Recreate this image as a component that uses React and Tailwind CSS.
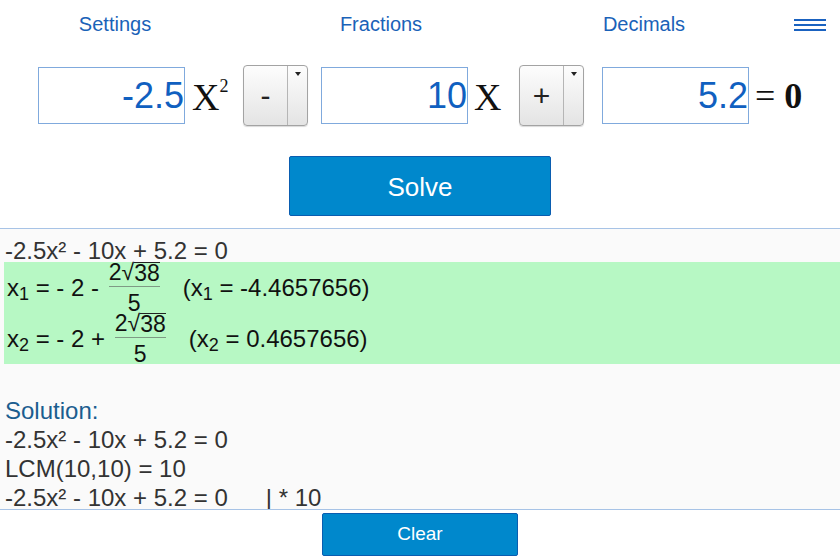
import React from "react";

const sans = { fontFamily: '"Liberation Sans", Arial, sans-serif' };
const serif = { fontFamily: '"Liberation Serif", "Times New Roman", serif' };

const Coef = ({ value }) => (
  <input
    readOnly
    value={value}
    className="w-[147px] h-[57px] border border-[#80aadd] bg-white text-right pr-0 pt-[1px] text-[36px] text-[#1060c0] outline-none"
    style={sans}
  />
);

const SignButton = ({ sign }) => (
  <div className="flex w-[65px] h-[61px] rounded-[4px] border border-[#a3a3a3] bg-gradient-to-b from-[#fdfdfd] to-[#e4e4e4] shadow-[0_1px_1px_rgba(0,0,0,0.15)]">
    <div className="flex-1 flex items-center justify-center text-[30px] text-[#222] border-r border-[#b5b5b5]" style={sans}>
      {sign}
    </div>
    <div className="w-[19px] flex justify-center pt-[6px]">
      <div className="w-0 h-0 border-l-[3px] border-r-[3px] border-t-[4px] border-l-transparent border-r-transparent border-t-[#222]" />
    </div>
  </div>
);

const Frac = () => (
  <span className="inline-flex flex-col items-center px-[3px] text-[23px] leading-[22px]">
    <span className="pb-[3px] flex items-end">
      2<span>√</span>
      <span className="border-t border-[#222] leading-[20px]">38</span>
    </span>
    <span className="h-px w-full bg-[#7f9a85]" />
    <span className="pt-[5px]">5</span>
  </span>
);

const Root = ({ idx, op, num }) => (
  <div className="h-[51px] flex items-center whitespace-pre text-[24px] text-[#111]">
    <span>
      x<sub>{idx}</sub> = - 2 {op}{" "}
    </span>
    <Frac />
    <span className="ml-[20px]">
      (x<sub>{idx}</sub> = {num})
    </span>
  </div>
);

export default function App() {
  return (
    <div className="w-[840px] h-[560px] bg-white overflow-hidden" style={sans}>
      {/* top menu */}
      <div className="h-[48px] flex items-center text-[20px] text-[#1a62b8]">
        <div className="w-[230px] text-center">Settings</div>
        <div className="w-[302px] text-center">Fractions</div>
        <div className="w-[224px] text-center">Decimals</div>
        <div className="ml-[38px] flex flex-col gap-[3px] pt-[1px]">
          <div className="w-[32px] h-[2px] bg-[#1a62c0]" />
          <div className="w-[32px] h-[2px] bg-[#1a62c0]" />
          <div className="w-[32px] h-[2px] bg-[#1a62c0]" />
        </div>
      </div>

      {/* equation inputs */}
      <div className="mt-[17px] h-[61px] flex items-center pl-[38px]">
        <Coef value="-2.5" />
        <div className="w-[58px] pl-[7px] pt-[2px] text-[38px] text-[#111] leading-none" style={serif}>
          X<sup className="text-[18px] -top-[1em]">2</sup>
        </div>
        <SignButton sign="-" />
        <div className="w-[13px]" />
        <Coef value="10" />
        <div className="w-[51px] pl-[6px] pt-[2px] text-[38px] text-[#111] leading-none" style={serif}>
          X
        </div>
        <SignButton sign="+" />
        <div className="w-[18px]" />
        <Coef value="5.2" />
        <div className="pl-[6px] text-[36px] text-[#111] leading-none whitespace-pre" style={serif}>
          = <span className="font-bold">0</span>
        </div>
      </div>

      <button className="block mx-auto mt-[30px] w-[262px] h-[60px] pt-[3px] bg-[#0088cc] border border-[#0a5db0] rounded-[2px] text-white text-[26px]">
        Solve
      </button>

      {/* results */}
      <div className="mt-[12px] h-[282px] border-t border-b border-[#a7c3e6] bg-[#fafafa] overflow-hidden text-[24px] text-[#333]">
        <div className="pt-[7px] pl-[5px] h-[33px] leading-[29px] whitespace-pre">-2.5x² - 10x + 5.2 = 0</div>
        <div className="ml-[4px] bg-[#b7f8c4] pl-[3px]">
          <Root idx="1" op="-" num="-4.4657656" />
          <Root idx="2" op="+" num="0.4657656" />
        </div>
        <div className="pl-[5px] pt-[32px] leading-[29px] whitespace-pre">
          <div className="text-[#1b5d8f]">Solution:</div>
          <div>-2.5x² - 10x + 5.2 = 0</div>
          <div>LCM(10,10) = 10</div>
          <div>
            -2.5x² - 10x + 5.2 = 0<span className="ml-[38px]">| * 10</span>
          </div>
        </div>
      </div>

      <button className="block mx-auto mt-[3px] w-[196px] h-[43px] bg-[#0088cc] border border-[#0a5db0] rounded-[2px] text-white text-[19px]">
        Clear
      </button>
    </div>
  );
}
